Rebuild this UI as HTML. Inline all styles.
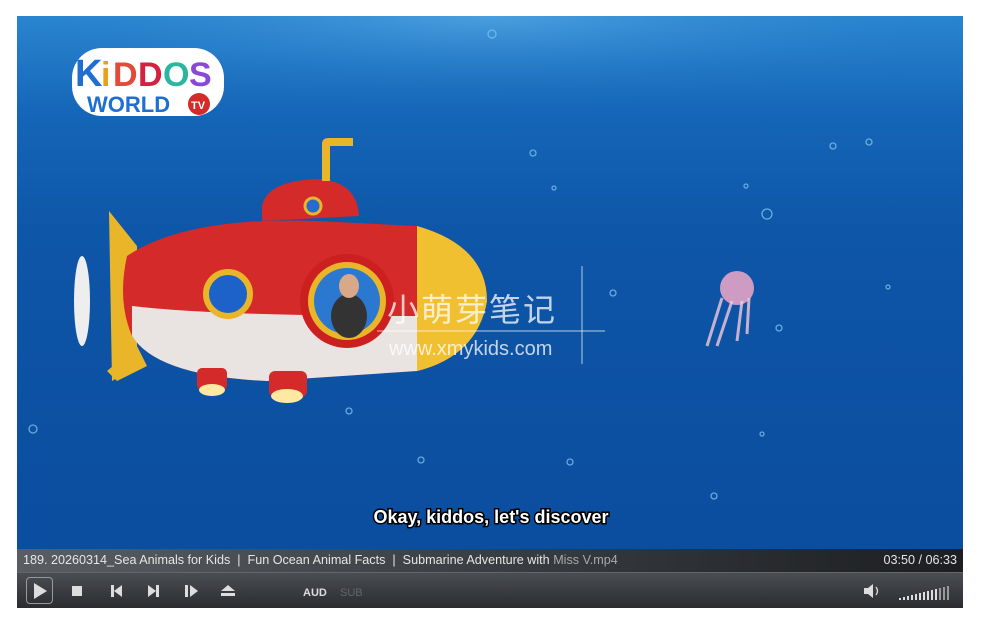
<!DOCTYPE html>
<html><head><meta charset="utf-8"><style>
*{margin:0;padding:0;box-sizing:border-box}
body{width:984px;height:631px;background:#fff;position:relative;overflow:hidden;font-family:"Liberation Sans","Noto Sans CJK SC",sans-serif}
#v{position:absolute;left:17px;top:16px;width:946px;height:533px;background:linear-gradient(180deg,#2a86d0 0%,#1566b8 18%,#0e56a8 40%,#0b4d9e 100%);overflow:hidden}
#info{position:absolute;left:17px;top:549px;width:946px;height:23px;background:linear-gradient(90deg,#5a5d62 0%,#3a3d42 50%,#1c1e21 100%);color:#e6e6e6;font-size:12.6px;line-height:23px;padding-left:6px;font-family:"Liberation Sans",sans-serif}
#ctl{position:absolute;left:17px;top:572px;width:946px;height:36px;background:linear-gradient(180deg,#4a4d52,#2a2c30);border-top:1px solid #666}
</style></head><body>
<div id="v">
<svg width="946" height="533" style="position:absolute;left:0;top:0">
<defs><radialGradient id="lt" cx="50%" cy="0%" r="60%"><stop offset="0" stop-color="#6ab8ee" stop-opacity=".5"/><stop offset="1" stop-color="#1566b8" stop-opacity="0"/></radialGradient></defs>
<rect width="946" height="160" fill="url(#lt)"/>
<g fill="none" stroke="#7ec0ee" stroke-width="1.3" opacity=".8">
<circle cx="475" cy="18" r="4"/><circle cx="750" cy="198" r="5"/><circle cx="516" cy="137" r="3"/><circle cx="596" cy="277" r="3"/><circle cx="697" cy="480" r="3"/><circle cx="16" cy="413" r="4"/><circle cx="553" cy="446" r="3"/><circle cx="404" cy="444" r="3"/><circle cx="332" cy="395" r="3"/><circle cx="816" cy="130" r="3"/><circle cx="852" cy="126" r="3"/><circle cx="762" cy="312" r="3"/><circle cx="729" cy="170" r="2"/><circle cx="745" cy="418" r="2"/><circle cx="871" cy="271" r="2"/><circle cx="537" cy="172" r="2"/>
</g>
<path d="M92 195 L120 230 L120 350 L95 365 Z" fill="#e8b628"/>
<ellipse cx="65" cy="285" rx="8" ry="45" fill="#eee"/>
<path d="M110 240 Q170 200 300 205 L400 210 Q470 230 470 285 Q460 340 400 355 L250 365 Q140 360 115 320 Q100 285 110 240Z" fill="#d42a2a"/>
<path d="M115 290 Q200 300 400 300 Q460 300 470 285 Q460 340 400 355 L250 365 Q140 360 115 320Z" fill="#e9e4e2"/>
<path d="M400 210 Q470 230 470 285 Q460 340 400 355 Z" fill="#f0c030"/>
<path d="M245 190 Q250 165 300 163 Q340 165 342 200 L245 205Z" fill="#d42a2a"/>
<path d="M305 165 V128 Q305 122 312 122 H336 V130 H313 V165Z" fill="#e8b628"/>
<circle cx="296" cy="190" r="8" fill="#2a6ad0" stroke="#e8b628" stroke-width="3"/>
<circle cx="211" cy="278" r="22" fill="#1d62c8" stroke="#e8b628" stroke-width="6"/>
<circle cx="330" cy="285" r="47" fill="#cc2020"/>
<circle cx="330" cy="285" r="39" fill="#e8b628"/>
<circle cx="330" cy="285" r="33" fill="#2a78d0"/>
<ellipse cx="332" cy="300" rx="18" ry="22" fill="#333"/>
<ellipse cx="332" cy="270" rx="10" ry="12" fill="#d8a888"/>
<rect x="180" y="352" width="30" height="22" rx="5" fill="#d42a2a"/><ellipse cx="195" cy="374" rx="13" ry="6" fill="#ffe9a0"/>
<rect x="252" y="355" width="38" height="26" rx="6" fill="#d42a2a"/><ellipse cx="270" cy="380" rx="16" ry="7" fill="#ffe9a0"/>
<path d="M90 355 L120 330 L130 350 L100 365Z" fill="#e8b628"/>
<ellipse cx="720" cy="272" rx="17" ry="17" fill="#f0a8c8" opacity=".85"/>
<path d="M705 282 L690 330 M715 285 L700 330 M725 285 L720 325 M732 282 L730 318" stroke="#f4c8dc" stroke-width="3" fill="none" opacity=".8"/>
<rect x="55" y="32" width="152" height="68" rx="30" fill="#fff"/>
<text x="58" y="70" font-family="Liberation Sans" font-weight="900" font-size="38" fill="#1f6fd0">K</text>
<text x="84" y="70" font-family="Liberation Sans" font-weight="900" font-size="34" fill="#e8a020">i</text>
<text x="96" y="70" font-family="Liberation Sans" font-weight="900" font-size="34" fill="#e24a3a">D</text>
<text x="121" y="70" font-family="Liberation Sans" font-weight="900" font-size="34" fill="#d32240">D</text>
<text x="146" y="70" font-family="Liberation Sans" font-weight="900" font-size="34" fill="#2cb5a0">O</text>
<text x="172" y="70" font-family="Liberation Sans" font-weight="900" font-size="34" fill="#8a48d8">S</text>
<text x="70" y="96" font-family="Liberation Sans" font-weight="900" font-size="22" fill="#1f6fd0">WORLD</text>
<circle cx="182" cy="88" r="11" fill="#d42a2a"/><text x="174" y="93" font-family="Liberation Sans" font-weight="700" font-size="11" fill="#fff">TV</text>
<line x1="565" y1="250" x2="565" y2="348" stroke="#fff" stroke-opacity=".7"/>
<line x1="360" y1="315" x2="588" y2="315" stroke="#fff" stroke-opacity=".7"/>
<text x="370" y="305" font-family="Noto Sans CJK SC,sans-serif" font-size="32" fill="#fff" fill-opacity=".75" letter-spacing="2">小萌芽笔记</text>
<text x="372" y="339" font-family="Liberation Sans" font-size="20" fill="#fff" fill-opacity=".75">www.xmykids.com</text>
<text x="474" y="507" text-anchor="middle" font-family="Liberation Sans" font-weight="700" font-size="18" fill="#fff" stroke="#000" stroke-width="3" paint-order="stroke">Okay, kiddos, let's discover</text>
</svg>
</div>
<div id="info">189. 20260314_Sea Animals for Kids &nbsp;|&nbsp; Fun Ocean Animal Facts &nbsp;|&nbsp; Submarine Adventure with <span style="color:#aaa">Miss V.mp4</span><span style="position:absolute;right:6px">03:50 / 06:33</span></div>
<div id="ctl">
<div style="position:absolute;left:9px;top:4px;width:27px;height:27px;border:1px solid #999;border-radius:4px"></div>
<svg width="946" height="36" style="position:absolute;left:0;top:0">
<g fill="#ddd">
<path d="M17 10 L30 18 L17 26Z"/>
<rect x="55" y="13" width="10" height="10"/>
<rect x="94" y="12" width="3" height="12"/><path d="M105 12 L97 18 L105 24Z"/>
<path d="M131 12 L139 18 L131 24Z"/><rect x="139" y="12" width="3" height="12"/>
<rect x="168" y="12" width="3" height="12"/><path d="M173 12 L181 18 L173 24Z"/>
<path d="M211 12 L218 18 L204 18Z"/><rect x="204" y="20" width="14" height="3"/>
<path d="M847 15 h4 l5 -4 v14 l-5 -4 h-4z"/>
</g>
<text x="286" y="23" font-family="Liberation Sans" font-size="11" font-weight="700" fill="#ddd">AUD</text>
<text x="323" y="23" font-family="Liberation Sans" font-size="11" fill="#666">SUB</text>
<path d="M859 14 q3 4 0 8" stroke="#ddd" fill="none" stroke-width="1.3"/>
<g fill="#ddd">
<rect x="882" y="25" width="2" height="2"/><rect x="886" y="24" width="2" height="3"/><rect x="890" y="23" width="2" height="4"/><rect x="894" y="22" width="2" height="5"/><rect x="898" y="21" width="2" height="6"/><rect x="902" y="20" width="2" height="7"/><rect x="906" y="19" width="2" height="8"/><rect x="910" y="18" width="2" height="9"/><rect x="914" y="17" width="2" height="10"/><rect x="918" y="16" width="2" height="11"/>
</g>
<g fill="#999"><rect x="922" y="15" width="2" height="12"/><rect x="926" y="14" width="2" height="13"/><rect x="930" y="13" width="2" height="14"/></g>
</svg>
</div>
</body></html>
